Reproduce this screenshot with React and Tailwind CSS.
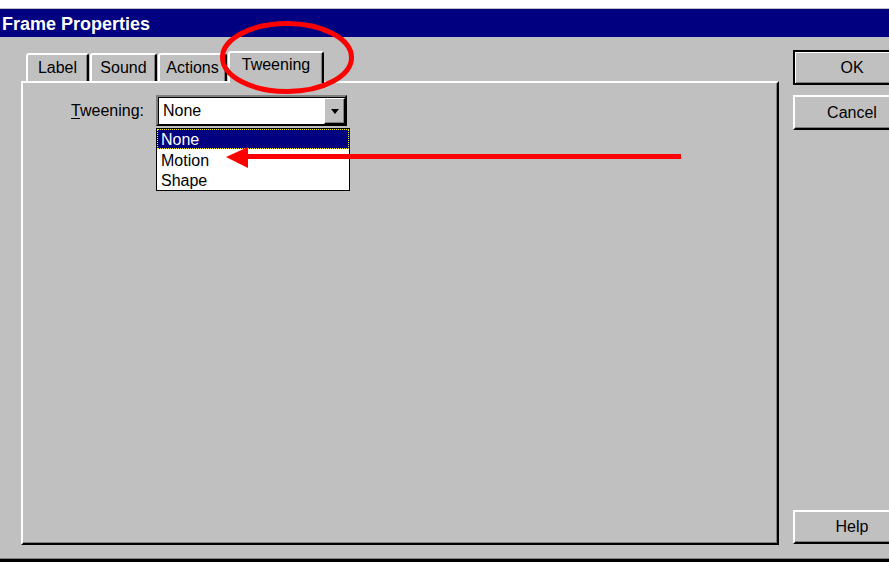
export default function App() {
    const tabs = [
        { label: 'Label', w: 'w-[63px]' },
        { label: 'Sound', w: 'w-[67px]' },
        { label: 'Actions', w: 'w-[69px]' },
    ];

    return (
        <div className="relative w-[889px] h-[565px] overflow-hidden bg-white text-black font-['Liberation_Sans',Arial,sans-serif]">
            <div className="mt-[8px] border-t border-[#c0c0c0]">
                {/* title bar */}
                <div className="h-[28px] bg-[#000080] pl-[2px] pt-[1px] text-[18px] font-bold leading-[28px] text-white">
                    Frame Properties
                </div>

                <div className="flex h-[521px] bg-[#c0c0c0]">
                    {/* tabs + page */}
                    <div className="pl-[21px] pt-[14px]">
                        <div className="flex h-[30px] items-end gap-[1px] pl-[5px]">
                            {tabs.map((tab) => (
                                <div
                                    key={tab.label}
                                    className={`${tab.w} h-[28px] rounded-t-[3px] border-t-2 border-l-2 border-r-2 border-white border-r-black pt-[4px] text-center text-[16px] leading-[18px] shadow-[inset_-1px_0_#808080]`}
                                >
                                    {tab.label}
                                </div>
                            ))}
                            <div className="relative z-10 -mb-[2px] h-[32px] w-[96px] rounded-t-[3px] border-t-2 border-l-2 border-r-2 border-white border-r-black bg-[#c0c0c0] pt-[3px] text-center text-[16px] leading-[18px] shadow-[inset_-1px_0_#808080]">
                                Tweening
                            </div>
                        </div>

                        <div className="relative h-[464px] w-[758px] border-2 border-white border-r-black border-b-black shadow-[inset_-1px_-1px_#808080]">
                            <div className="flex items-center pt-[12px]">
                                <div className="w-[133px] pr-[12px] pt-[1px] text-right text-[16px] leading-[18px]">
                                    <span className="underline underline-offset-[2px]">T</span>weening:
                                </div>
                                <div className="flex h-[31px] w-[191px] border-2 border-[#808080] border-r-black border-b-black bg-white shadow-[inset_1px_1px_#000]">
                                    <div className="flex-1 pl-[5px] pt-[5px] text-[16px] leading-[18px]">None</div>
                                    <div className="mt-[1px] flex h-[26px] w-[21px] items-center justify-center border border-white border-r-black border-b-black bg-[#c0c0c0] shadow-[inset_-1px_-1px_#808080]">
                                        <svg width="8" height="5" viewBox="0 0 8 5">
                                            <path d="M0 0h8L4 5z" fill="#000" />
                                        </svg>
                                    </div>
                                </div>
                            </div>

                            {/* open list */}
                            <div className="absolute left-[133px] top-[45px] z-10 w-[194px] border border-black bg-white text-[16px] leading-[18px]">
                                <div className="h-[20px] border border-dotted border-[#ffff00] bg-[#000080] pl-[3px] pt-[1px] text-white">None</div>
                                <div className="h-[21px] pl-[4px] pt-[3px]">Motion</div>
                                <div className="h-[20px] pl-[4px] pt-[2px]">Shape</div>
                            </div>
                        </div>
                    </div>

                    {/* buttons */}
                    <div className="ml-[14px] flex flex-col pt-[13px] text-[16px]">
                        <div className="flex h-[35px] w-[118px] shrink-0 items-center justify-center border-2 border-black shadow-[inset_1px_1px_#fff,inset_-1px_-1px_#808080]">
                            OK
                        </div>
                        <div className="mt-[10px] flex h-[35px] w-[118px] shrink-0 items-center justify-center border-2 border-white border-r-black border-b-black shadow-[inset_-1px_-1px_#808080]">
                            Cancel
                        </div>
                        <div className="mt-[380px] flex h-[34px] w-[118px] shrink-0 items-center justify-center border-2 border-white border-r-black border-b-black shadow-[inset_-1px_-1px_#808080]">
                            Help
                        </div>
                    </div>
                </div>
                <div className="h-[1px] bg-[#808080]" />
                <div className="h-[3px] bg-black" />
            </div>

            {/* red annotations */}
            <svg className="pointer-events-none absolute left-0 top-0 z-20" width="889" height="565">
                <ellipse cx="287" cy="57.5" rx="64.5" ry="34" fill="none" stroke="#ff0000" strokeWidth="5" />
                <rect x="246" y="154" width="435" height="5" fill="#ff0000" />
                <polygon points="226,157 248,147 248,168" fill="#ff0000" />
            </svg>
        </div>
    );
}
